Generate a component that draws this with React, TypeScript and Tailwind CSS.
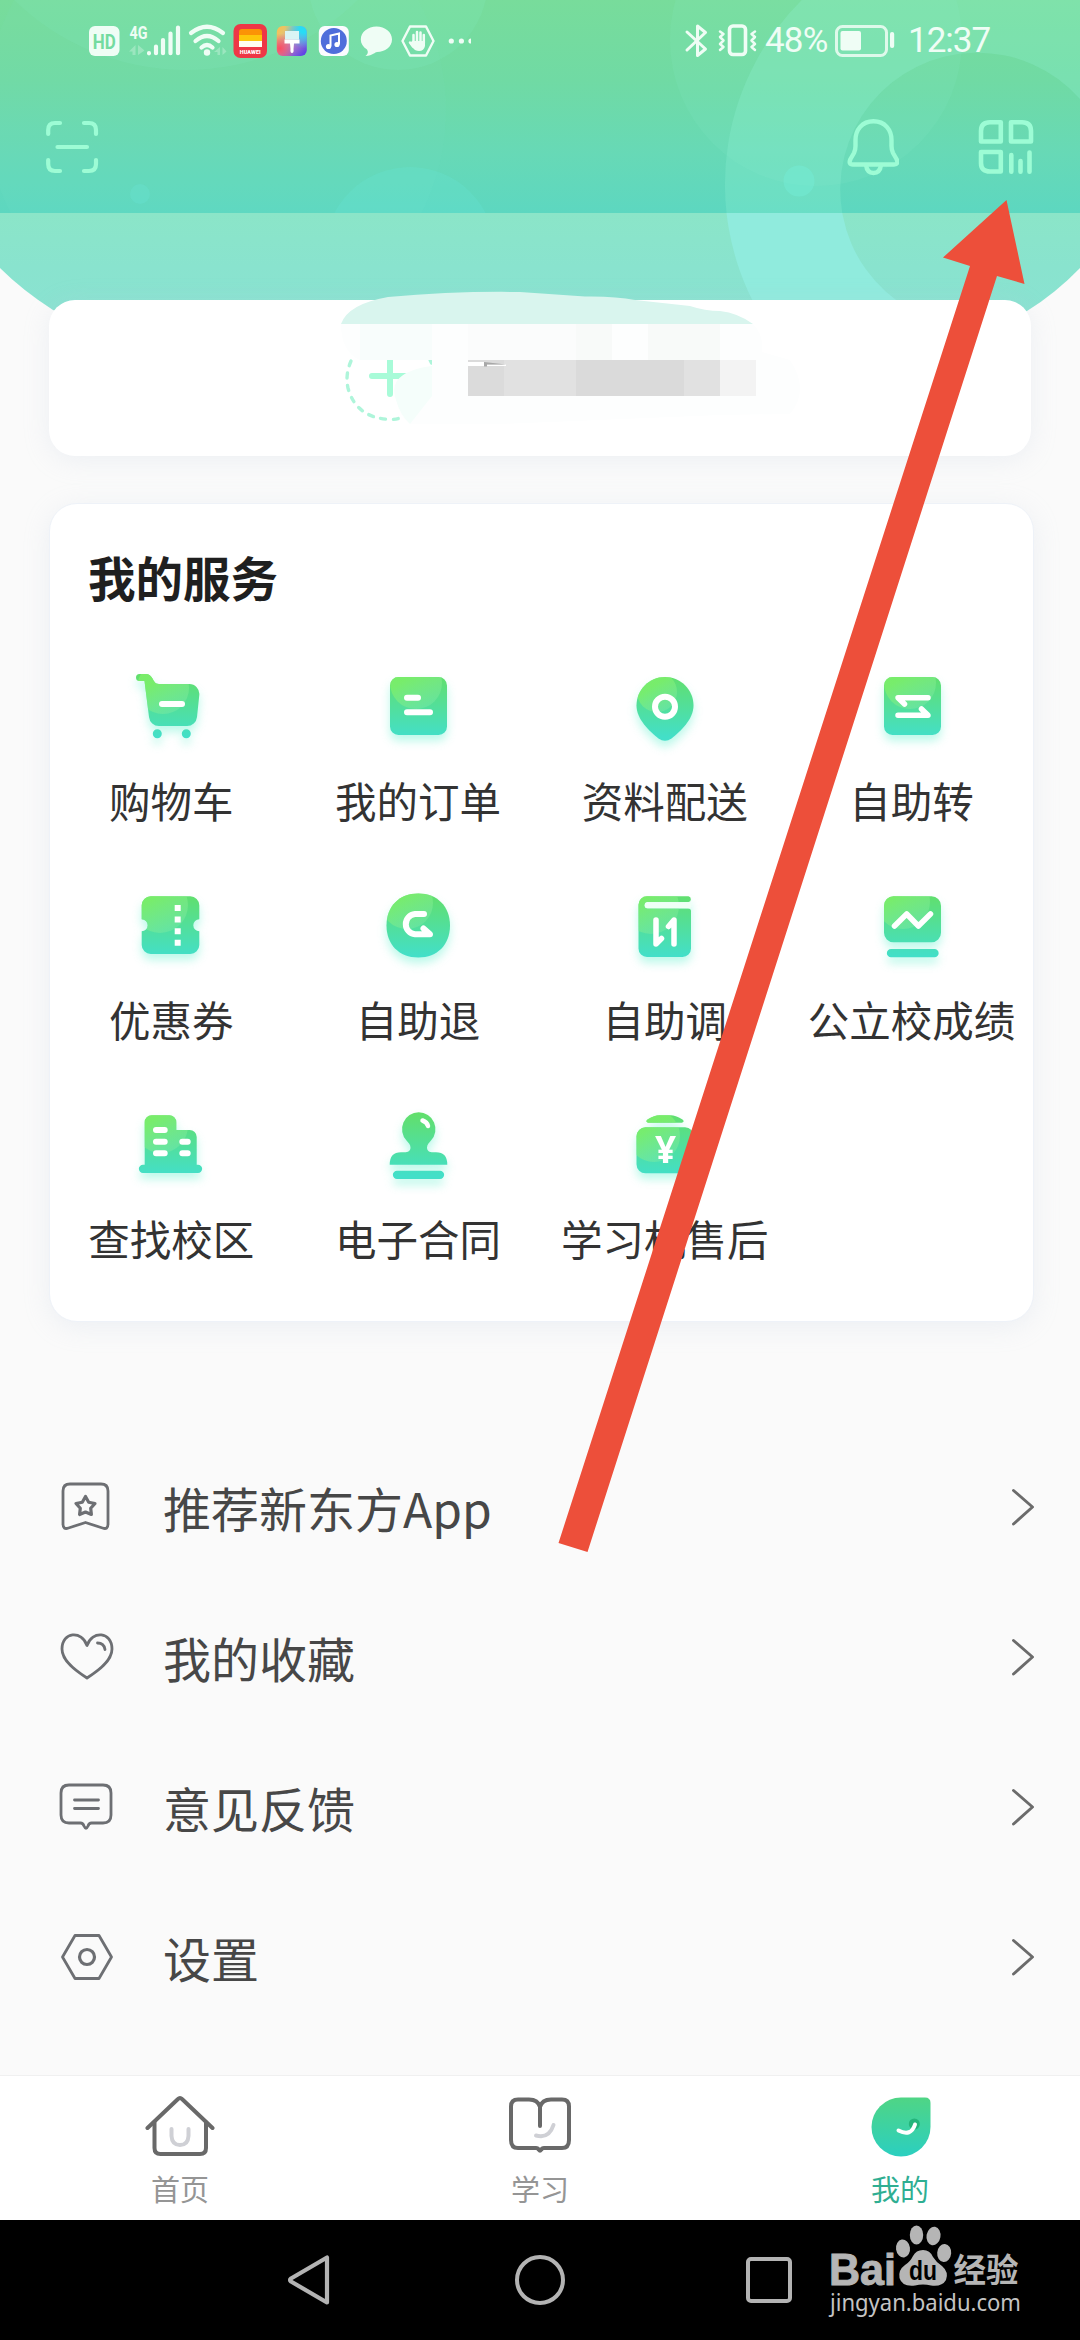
import type { ReactNode } from 'react';

const FONT = "font-['Noto_Sans_CJK_SC','Noto_Sans',sans-serif]";

// Green service icon: gradient body with a soft highlight circle clipped to it
const ServiceIcon = ({ id, body, shine, children }: { id: string; body: string; shine?: [number, number, number]; children?: ReactNode }) => (
  <svg className="h-[72px] w-[72px] overflow-visible drop-shadow-[0_6px_5px_rgba(80,240,200,0.38)]" viewBox="0 0 72 72" fill="none">
    <defs>
      <linearGradient id={`fill-${id}`} gradientUnits="userSpaceOnUse" x1="36" y1="4" x2="36" y2="66">
        <stop offset="0" stopColor="#62df6b" />
        <stop offset="1" stopColor="#43dfc8" />
      </linearGradient>
      <linearGradient id={`shine-${id}`} x1="0.2" y1="0.1" x2="0.8" y2="1">
        <stop offset="0.3" stopColor="#80f168" stopOpacity="0.75" />
        <stop offset="1" stopColor="#86ebae" stopOpacity="0.32" />
      </linearGradient>
      <clipPath id={`clip-${id}`}>
        <path d={body} />
      </clipPath>
    </defs>
    <path d={body} fill={`url(#fill-${id})`} />
    {shine && <circle cx={shine[0]} cy={shine[1]} r={shine[2]} fill={`url(#shine-${id})`} clipPath={`url(#clip-${id})`} />}
    <g stroke="#fff" strokeWidth="6" strokeLinecap="round" strokeLinejoin="round">{children}</g>
  </svg>
);

const SQUARE = 'M16.500 6H56.500A8.500 8.500 0 0 1 65 14.500V55.500A8.500 8.500 0 0 1 56.500 64H16.500A8.500 8.500 0 0 1 8 55.500V14.500A8.500 8.500 0 0 1 16.500 6Z';

const services = [
  {
    label: '购物车',
    icon: (
      <ServiceIcon
        id="cart"
        shine={[28, 17, 26]}
        body="M4.500 3H11C14 3 16 5 17.500 7.500C19 10 20 13 24 13H54A10 10 0 0 1 64.300 24L62 46A10 10 0 0 1 52 55H24A10 10 0 0 1 14 46L9.500 10H4.500A3.500 3.500 0 0 1 4.500 3Z M17.800 62.700a4.500 4.500 0 1 0 9 0a4.500 4.500 0 1 0 -9 0Z M46.800 62.700a4.500 4.500 0 1 0 9 0a4.500 4.500 0 1 0 -9 0Z"
      >
        <path d="M27 33H47" />
      </ServiceIcon>
    ),
  },
  {
    label: '我的订单',
    icon: (
      <ServiceIcon id="order" shine={[34, 12, 26]} body={SQUARE}>
        <path d="M25 26.700H36M25 41.300H48" />
      </ServiceIcon>
    ),
  },
  {
    label: '资料配送',
    icon: (
      <ServiceIcon
        id="delivery"
        shine={[28, 21, 20]}
        body="M36 6C52 6 64.500 19 64.500 34.500C64.500 48 52 60 42.500 67.500Q36 72 29.500 67.500C20 60 7.500 48 7.500 34.500C7.500 19 20 6 36 6Z"
      >
        <circle cx="36" cy="35.700" r="10" />
      </ServiceIcon>
    ),
  },
  {
    label: '自助转',
    icon: (
      <ServiceIcon id="transfer" shine={[34, 12, 26]} body={SQUARE}>
        <path d="M52 26.700H22L28.500 33M22 44.300H52L45.500 38" strokeWidth="5.500" />
      </ServiceIcon>
    ),
  },
  {
    label: '优惠券',
    icon: (
      <ServiceIcon
        id="coupon"
        shine={[25, 15, 28]}
        body="M15.700 6.300H55.300A9 9 0 0 1 64.300 15.300V29.300A6 6 0 0 0 64.300 41.300V55A9 9 0 0 1 55.300 64H15.700A9 9 0 0 1 6.700 55V41.300A6 6 0 0 0 6.700 29.300V15.300A9 9 0 0 1 15.700 6.300Z"
      >
        <path d="M42.700 15V56" strokeDasharray="6 5.600" strokeLinecap="butt" />
      </ServiceIcon>
    ),
  },
  {
    label: '自助退',
    icon: (
      <ServiceIcon
        id="refund"
        shine={[25, 13, 26]}
        body="M36.300 3.500C55.500 3.500 68 16.500 68 35.500C68 54.500 55.500 67.500 36.300 67.500C17 67.500 4.500 54.500 4.500 35.500C4.500 16.500 17 3.500 36.300 3.500Z"
      >
        <path d="M42 24H33A10.200 10.200 0 0 0 33 44.300H48L41.500 38.500" />
      </ServiceIcon>
    ),
  },
  {
    label: '自助调',
    icon: (
      <ServiceIcon
        id="adjust"
        shine={[22, 16, 28]}
        body="M18 6.300H59.500A2.900 2.900 0 0 1 59.500 12H18.500Q15.500 12 15.500 15.200T18.500 18.400H59Q62 18.400 62 21V58.500A8.500 8.500 0 0 1 53.500 67H18A8.500 8.500 0 0 1 9.500 58.500V14.800A8.500 8.500 0 0 1 18 6.300Z"
      >
        <path d="M18.700 15.300H59.500" strokeWidth="6" stroke="#effff6" />
        <path d="M27 30V54L32.500 48.500M45 54V30L39.500 36.500" strokeWidth="5.500" />
      </ServiceIcon>
    ),
  },
  {
    label: '公立校成绩',
    icon: (
      <ServiceIcon
        id="score"
        shine={[27, 12, 27]}
        body="M17.500 6.300H55.500A9.500 9.500 0 0 1 65 15.800V42.800A9.500 9.500 0 0 1 55.500 52.300H17.500A9.500 9.500 0 0 1 8 42.800V15.800A9.500 9.500 0 0 1 17.500 6.300Z M15 59H58.500A4.100 4.100 0 0 1 58.500 67.300H15A4.100 4.100 0 0 1 15 59Z"
      >
        <path d="M18.500 36L30.700 24L42.400 36L54.500 24" strokeWidth="5.500" />
      </ServiceIcon>
    ),
  },
  {
    label: '查找校区',
    icon: (
      <ServiceIcon
        id="campus"
        shine={[26, 17, 27]}
        body="M16.700 6.300H34.300A7 7 0 0 1 41.300 13.300V21H54.700A7 7 0 0 1 61.700 28V55.700H63A4.150 4.150 0 0 1 63 64H8A4.150 4.150 0 0 1 8 55.700H9.700V13.300A7 7 0 0 1 16.700 6.300Z"
      >
        <path d="M21 21H29.700M21 32.700H29.700M21 44.200H29.700M47.300 32.700H52.700M47.300 44.200H52.700" />
      </ServiceIcon>
    ),
  },
  {
    label: '电子合同',
    icon: (
      <ServiceIcon
        id="contract"
        body="M36.700 3.300A16.800 16.800 0 0 1 49 31.500C47 34 45 35.500 45 38.500C45 42 47.500 43.300 51 43.300H54Q65.300 43.300 65.300 55.700H7.700Q7.700 43.300 19 43.300H22.500C26 43.300 28.500 42 28.500 38.500C28.500 35.500 26.500 34 24.500 31.500A16.800 16.800 0 0 1 36.700 3.300Z M15 61.700H58A4.150 4.150 0 0 1 58 70H15A4.150 4.150 0 0 1 15 61.700Z"
      >
        <path d="M40.500 11.500Q45 13 46 17" strokeWidth="4.500" />
      </ServiceIcon>
    ),
  },
  {
    label: '学习机售后',
    icon: (
      <ServiceIcon
        id="aftersale"
        shine={[25, 27, 26]}
        body="M16.500 18.300H56A9 9 0 0 1 65 27.300V55.300A9 9 0 0 1 56 64.300H16.500A9 9 0 0 1 7.500 55.300V27.300A9 9 0 0 1 16.500 18.300Z M19 13.700Q16 12.700 18.500 10.500Q26 6.300 30 6.300H42Q46 6.300 53.500 10.500Q56 12.700 53 13.700Z"
      >
        <text x="36.500" y="53.500" textAnchor="middle" fontFamily="Noto Sans" fontWeight="700" fontSize="37" fill="#fff" stroke="none">¥</text>
      </ServiceIcon>
    ),
  },
];

const menuItems = [
  {
    label: '推荐新东方App',
    icon: (
      <>
        <path d="M12 5H43Q50 5 50 12V45Q50 51 44.500 49L27.500 43.500L10.500 49Q5 51 5 45V12Q5 5 12 5Z" />
        <path d="M27.500 17.500L30.700 23.200L37 24.500L32.700 29.300L33.400 35.500L27.500 33L21.600 35.500L22.300 29.300L18 24.500L24.300 23.200Z" strokeWidth="3.200" />
      </>
    ),
  },
  {
    label: '我的收藏',
    icon: (
      <>
        <path d="M29 16.500C24 1 4 2.500 4 20C4 32 18 42 29 49C40 42 54 32 54 20C54 2.500 34 1 29 16.500Z" />
        <path d="M39.500 14Q46 14 47 20.500" />
      </>
    ),
  },
  {
    label: '意见反馈',
    icon: (
      <>
        <path d="M11 6H45Q53 6 53 14V36Q53 44 45 44H33.500Q31 44 30 47Q28 51.500 26 47Q25 44 22.500 44H11Q3 44 3 36V14Q3 6 11 6Z" />
        <path d="M16.500 21H40.500M16.500 29.500H40.500" />
      </>
    ),
  },
  {
    label: '设置',
    icon: (
      <>
        <path d="M17 6.500H41L53.500 28L41 49.500H17L4.500 28Z" />
        <circle cx="29" cy="28" r="7.500" strokeWidth="3.200" />
      </>
    ),
  },
];

const tabs = [
  {
    label: '首页',
    active: false,
    icon: (
      <g fill="none" strokeLinecap="round" strokeLinejoin="round" stroke="#696969" strokeWidth="4">
        <path d="M2.500 33L33 4Q35 2 37 4L67.500 33" />
        <path d="M9.500 27.500V53Q9.500 59 15.500 59H55Q61 59 61 53V27.500" />
        <path d="M26.500 34V41Q27 50 35 50Q43 50 43.500 41V34" stroke="#cfd0d5" />
      </g>
    ),
  },
  {
    label: '学习',
    active: false,
    icon: (
      <g fill="none" strokeLinecap="round" strokeLinejoin="round" stroke="#696969" strokeWidth="4">
        <path d="M31 40.500Q44 44 48.500 30" stroke="#cfd0d5" />
        <path d="M35 31V12Q33 4.500 24 4.500H13Q6 4.500 6 11.500V45Q6 53 13 53H31Q33 53 34 55Q35 56.500 36 55Q37 53 39 53H57Q64 53 64 45V11.500Q64 4.500 57 4.500H46Q37 4.500 35 12" />
      </g>
    ),
  },
  {
    label: '我的',
    active: true,
    icon: (
      <g fill="none" strokeLinecap="round">
        <defs>
          <linearGradient id="leaf" x1="0" y1="0" x2="0" y2="1">
            <stop offset="0" stopColor="#4fd585" />
            <stop offset="1" stopColor="#2bcfc0" />
          </linearGradient>
        </defs>
        <path d="M36 2.500H60Q65.500 2.500 65.500 8V32A29.500 29.500 0 1 1 36 2.500Z" fill="url(#leaf)" />
        <circle cx="49.300" cy="29" r="5.500" fill="#25b57b" />
        <path d="M33.500 35.500Q46 42 50 29.500" stroke="#fff" strokeWidth="4" />
      </g>
    ),
  },
];

const StatusBar = () => (
  <div className="flex h-[82px] items-center pl-[88px] pr-[88px] text-[#effdf5]">
    <svg className="h-9 w-[388px] overflow-visible" viewBox="88 23 388 36" fill="none">
      <defs>
        <linearGradient id="theme" x1="0" y1="0" x2="1" y2="1">
          <stop offset="0" stopColor="#fbc04a" />
          <stop offset="0.2" stopColor="#e8c46c" />
          <stop offset="0.5" stopColor="#c48ac0" />
          <stop offset="1" stopColor="#4b35ee" />
        </linearGradient>
        <radialGradient id="themeRed" cx="0.1" cy="0.75" r="0.5">
          <stop offset="0" stopColor="#fb4d62" />
          <stop offset="1" stopColor="#fb4d62" stopOpacity="0" />
        </radialGradient>
        <radialGradient id="themeCyan" cx="0.9" cy="0.1" r="0.65">
          <stop offset="0.2" stopColor="#27dcf5" />
          <stop offset="1" stopColor="#27dcf5" stopOpacity="0" />
        </radialGradient>
      </defs>
      <rect x="89" y="26" width="30.500" height="30" rx="6" fill="currentColor" />
      <text x="104.200" y="48.500" textAnchor="middle" fontFamily="Roboto" fontWeight="700" fontSize="19.500" textLength="23" lengthAdjust="spacingAndGlyphs" fill="#74dba0">HD</text>
      <text x="129.500" y="38.800" fontFamily="Roboto" fontWeight="700" fontSize="19" textLength="18" lengthAdjust="spacingAndGlyphs" fill="currentColor">4G</text>
      <g fill="currentColor" opacity="0.3">
        <path d="M135.500 45V55H132.500V51.500H129ZM138 55V45L144.500 50.500ZM220 47V55H217.500V52H214ZM222.500 47L226.500 51.500L222.500 55Z" />
      </g>
      <g stroke="currentColor" strokeWidth="4.200" strokeLinecap="round">
        <path d="M149 53.200V53.300M156 46.500V53.200M163 40V53.200M170.500 33.500V53.200M178 27.500V53.200" />
        <path d="M191 33Q207 20.500 223 33M195.500 41Q207 31 218.500 41M201.500 47.500Q207 42.500 212.500 47.500" />
      </g>
      <circle cx="207" cy="52.500" r="3.200" fill="currentColor" />
      <rect x="233.500" y="24" width="33.500" height="34" rx="7" fill="#ee3746" />
      <path d="M239 32Q239 29 242 29H259Q262 29 262 32V35H239Z" fill="#fb9306" />
      <path d="M239 35H262V41H239Z" fill="#fdc60b" />
      <path d="M239 41H262V47H239Z" fill="#fffdf0" />
      <text x="250.200" y="53.500" textAnchor="middle" fontFamily="Roboto" fontWeight="900" fontSize="5.500" textLength="21" fill="#fff">HUAWEI</text>
      <rect x="276.800" y="26" width="30" height="30" rx="6" fill="url(#theme)" />
      <rect x="276.800" y="26" width="30" height="30" rx="6" fill="url(#themeRed)" />
      <rect x="276.800" y="26" width="30" height="30" rx="6" fill="url(#themeCyan)" />
      <path d="M285 31H299V39.500H285Z" fill="#d9f4f5" />
      <path d="M284.500 39.500H299.500V43.500H294L293.500 49Q294 53 292 53Q290 53 290.500 49L290 43.500H284.500Z" fill="#fff" />
      <rect x="318.800" y="26" width="30" height="30" rx="6" fill="#fbfbff" />
      <circle cx="333.800" cy="41" r="13" fill="#4f6edb" />
      <path d="M330.500 46.500V35.500L339 33.500V44.500" stroke="#fff" strokeWidth="2" />
      <circle cx="328.500" cy="46.500" r="2.600" fill="#fff" />
      <circle cx="337" cy="44.500" r="2.600" fill="#fff" />
      <path d="M376.500 26.500C385 26.500 392 32 392 39.500C392 47 385 52 377 52C375 52 373 55.500 365.500 56C368 54 368.500 52 367 49.500C363 47 360.800 43.500 360.800 39.500C360.800 32 368 26.500 376.500 26.500Z" fill="currentColor" />
      <path d="M410 26.500H426L433.500 41L426 55.500H410L402.500 41Z" stroke="currentColor" strokeWidth="2.400" strokeLinejoin="round" />
      <path d="M413.500 43V35M417 42V32M420.500 42V32.500M423.800 43V35M410 42.500L413 46.500" stroke="currentColor" strokeWidth="2.500" strokeLinecap="round" />
      <path d="M412.300 41H425V46Q424 51 419 51Q415 51 413 48L409.500 43Z" fill="currentColor" />
      <circle cx="451.300" cy="41" r="2.600" fill="currentColor" />
      <circle cx="461.400" cy="41" r="2.600" fill="currentColor" />
      <path d="M471 38.400A2.600 2.600 0 0 0 471 43.600Z" fill="currentColor" />
    </svg>
    <div className="ml-auto flex items-center font-['Roboto',sans-serif] text-[35px] leading-[36px]">
      <svg className="h-9 w-20" viewBox="682 23 80 36" fill="none" stroke="currentColor" strokeWidth="3" strokeLinejoin="round" strokeLinecap="round">
        <path d="M687 32L705.500 49L697.500 55.500V26L705.500 32.500L687 50" />
        <rect x="729.500" y="26" width="16" height="28.500" rx="3.500" strokeWidth="3.600" />
        <path d="M720 31.500L723.500 34L720 37L723.500 40.500L720 44L723.500 47L720 50M755 31.500L751.500 34L755 37L751.500 40.500L755 44L751.500 47L755 50" strokeWidth="2.500" />
      </svg>
      <span className="w-[70px] whitespace-nowrap pl-[3px] tracking-[-0.8px]">48%</span>
      <svg className="ml-0.5 h-9 w-[62px]" viewBox="834 23 62 36" fill="none">
        <rect x="836.500" y="26.500" width="50" height="29" rx="6" stroke="currentColor" strokeOpacity="0.85" strokeWidth="3" />
        <rect x="840.500" y="31" width="20.500" height="19.500" rx="2" fill="currentColor" />
        <rect x="890" y="32" width="4.200" height="16" rx="2" fill="currentColor" />
      </svg>
      <span className="ml-3 w-[84px] whitespace-nowrap tracking-[-1px]">12:37</span>
    </div>
  </div>
);

const Header = () => (
  <header className="relative h-[300px]">
    <svg className="absolute left-0 top-0 h-[320px] w-[1080px]" viewBox="0 0 1080 320">
      <defs>
        <linearGradient id="band" x1="0" y1="0" x2="0" y2="1">
          <stop offset="0" stopColor="#78dc9b" />
          <stop offset="0.38" stopColor="#70daa4" />
          <stop offset="0.72" stopColor="#67d9b6" />
          <stop offset="1" stopColor="#5dd7c0" />
        </linearGradient>
        <linearGradient id="under" x1="0" y1="0" x2="0" y2="1">
          <stop offset="0" stopColor="#8be5c8" />
          <stop offset="0.5" stopColor="#89e3ce" />
          <stop offset="1" stopColor="#8ae2d2" />
        </linearGradient>
        <clipPath id="bandClip">
          <path d="M0 0H1080V213H0Z" />
        </clipPath>
        <clipPath id="underClip">
          <path d="M0 213H1080V320H0Z" />
        </clipPath>
      </defs>
      <path d="M0 213H1080V268Q1056 293 1027 311L1000 320H80L53 310Q22 290 0 268Z" fill="url(#under)" />
      <path d="M0 0H1080V213H0Z" fill="url(#band)" />
      <g clipPath="url(#bandClip)" fill="#8af0d0">
        <circle cx="186" cy="-176" r="246" opacity="0.12" />
        <circle cx="398" cy="-20" r="90" opacity="0.14" />
        <circle cx="216" cy="110" r="230" opacity="0.05" />
        <circle cx="410" cy="252" r="85" fill="#6ae6dc" opacity="0.22" />
        <circle cx="140" cy="194" r="10" fill="#6ae6dc" opacity="0.25" />
        <circle cx="816" cy="40" r="146" opacity="0.12" />
        <circle cx="799" cy="181" r="15.500" fill="#6ef0e0" opacity="0.35" />
      </g>
      {/* large ring on the right, brighter below the band */}
      <path
        clipPath="url(#bandClip)"
        d="M807 -5A259 259 0 0 0 757 309H910A137 137 0 1 1 1080 99V-5Z"
        fill="#92f2d8"
        opacity="0.25"
      />
      <path
        clipPath="url(#underClip)"
        d="M807 -5A259 259 0 0 0 757 309H910A137 137 0 1 1 1080 99V-5Z"
        fill="#90ebdd"
      />
    </svg>
    <div className="relative">
      <StatusBar />
      <div className="flex h-[130px] items-center pl-11 pr-11">
        <svg className="h-14 w-14" viewBox="44 119 56 56" fill="none" stroke="#9dfcd5" strokeWidth="4.200" strokeLinecap="round">
          <path d="M48.200 134V130Q48.200 123 55 123H60M84 123H89Q96 123 96 130V134M96 160V164Q96 171 89 171H84M60 171H55Q48.200 171 48.200 164V160M57.500 147H87" />
        </svg>
        <svg className="ml-auto h-[60px] w-[54px]" viewBox="844 118 54 60" fill="none" stroke="#9dfcd5" strokeWidth="4.400" strokeLinejoin="round">
          <path d="M872.500 122.200C861 122.200 854.500 131 854.500 141V147Q854.500 151 853 154L849.500 160Q847 165.500 852 165.500H893Q898 165.500 895.500 160L892 154Q890.500 151 890.500 147V141C890.500 131 884 122.200 872.500 122.200Z" />
          <path d="M865 166Q866 174 872.500 174Q879 174 880 166" />
        </svg>
        <svg className="ml-[77px] h-[60px] w-[60px]" viewBox="975 117 60 60" fill="none" stroke="#9dfcd5" strokeWidth="4.600" strokeLinejoin="round" strokeLinecap="round">
          <path d="M989 122.200H999.800V141.500H980V131Q980 122.200 989 122.200ZM1010 122.200H1021Q1030 122.200 1030 131V141.500H1010ZM980 152H999.800V171.500H989Q980 171.500 980 163Z" />
          <path d="M1010.300 155V171.800M1019.500 161V171.800M1028.500 152.500V171.800" />
        </svg>
      </div>
    </div>
  </header>
);

const ProfileCard = () => (
  <section className="relative ml-[49px] h-[156px] w-[982px] rounded-[26px] bg-white shadow-[0_4px_26px_rgba(190,205,225,0.22)]">
    <svg className="absolute left-[251px] top-[-20px] h-[170px] w-[520px]" viewBox="300 280 520 170" fill="none">
      {/* add-avatar button */}
      <path d="M351 361Q345 375 348 388Q356 418 390 419.500Q399 419.500 404 416" stroke="#aef5da" strokeWidth="3.400" strokeLinecap="round" strokeDasharray="5 7.500" />
      <path d="M430 360L431.500 363" stroke="#aef5da" strokeWidth="3.200" strokeLinecap="round" />
      <path d="M390 360V394M372 376H408" stroke="#a8fbd8" strokeWidth="6" strokeLinecap="round" />
      <path d="M432 366Q386 372 396 400Q400 415 410 424H432Z" fill="#f5fefb" />
      {/* smudged nickname */}
      <path d="M341 324Q348 304 388 297Q455 291 520 292L585 296.500Q615 296 635 300L690 306Q705 311 720 311Q738 313 753 324Z" fill="#d9f5ee" />
      <path d="M341 324H753Q764 335 762 352L790 360Q810 390 790 414L720 415L500 424H410L432 396V360H360Q341 352 341 324Z" fill="#fdfefe" />
      <path d="M360 324H432V360H360Z" fill="#f8fdfc" />
      <path d="M468 324H576V360H468Z" fill="#fbfcfc" />
      <path d="M576 324H612V360H576ZM648 324H720V360H648Z" fill="#f8faf9" />
      <path d="M468 360H504V396H468Z" fill="#dbdbdb" />
      <path d="M504 360H576V396H504Z" fill="#e1e1e1" />
      <path d="M576 360H684V396H576Z" fill="#dadada" />
      <path d="M684 360H720V396H684Z" fill="#e1e1e1" />
      <path d="M720 360H756V396H720Z" fill="#f3f3f3" />
      <path d="M468 362H484V366H468ZM487 364.500H506V366H487Z" fill="#fff" />
      <path d="M484 362L506 364.500H487V366.500H484Z" fill="#a8a8a8" />
    </svg>
  </section>
);

const ServicesCard = () => (
  <section className="ml-[49px] mt-[47px] h-[819px] w-[985px] rounded-[28px] border border-[#eef2f8] bg-white pt-[43px] shadow-[0_5px_26px_rgba(190,205,225,0.22)]">
    <h2 className="pl-[38px] text-[47.5px] font-bold leading-[60px] text-[#1f1f1f]">我的服务</h2>
    <div className="-ml-0.5 -mr-0.5 mt-16 grid grid-cols-4 gap-y-[65px]">
      {services.map((item) => (
        <div key={item.label} className="flex flex-col items-center">
          {item.icon}
          <span className="mt-8 whitespace-nowrap text-[41.5px] leading-[50px] text-[#333]">{item.label}</span>
        </div>
      ))}
    </div>
  </section>
);

const Menu = () => (
  <nav className="mt-[110px]">
    {menuItems.map((item) => (
      <div key={item.label} className="flex h-[150px] items-center pl-[58px] pr-[45px]">
        <svg className="h-[56px] w-[58px]" viewBox="0 0 58 56" fill="none" stroke="#6d6f73" strokeWidth="2.800" strokeLinecap="round" strokeLinejoin="round">
          {item.icon}
        </svg>
        <span className="ml-[47px] text-[48px] leading-[60px] text-[#474747]">{item.label}</span>
        <svg className="ml-auto h-10 w-6" viewBox="0 0 24 40" fill="none" stroke="#6b6b6b" strokeWidth="2.900" strokeLinecap="round" strokeLinejoin="round">
          <path d="M2.500 3.500L21.500 20L2.500 37" />
        </svg>
      </div>
    ))}
  </nav>
);

const TabBar = () => (
  <nav className="mt-[43px] grid h-[145px] grid-cols-3 border-t border-[#f0f0f0] bg-white">
    {tabs.map((tab) => (
      <div key={tab.label} className="flex flex-col items-center pt-[19px]">
        <svg className="h-[62px] w-[70px]" viewBox="0 0 70 62">
          {tab.icon}
        </svg>
        <span className={`mt-[13px] text-[29px] leading-[36px] ${tab.active ? 'text-[#2fae92]' : 'text-[#959595]'}`}>{tab.label}</span>
      </div>
    ))}
  </nav>
);

const SystemNav = () => (
  <div className="flex h-[120px] items-center bg-black pl-[284px]">
    <svg className="h-14 w-14" viewBox="284 2252 56 56" fill="none" stroke="#b3b3b3" strokeWidth="4.200" strokeLinejoin="round">
      <path d="M327 2257.500V2302.500L291 2281.500Q289 2280 291 2278.500Z" />
    </svg>
    <span className="ml-[175px] h-[50px] w-[50px] rounded-full border-[4px] border-[#b3b3b3]" />
    <span className="ml-[181px] h-[46px] w-[46px] rounded-[5px] border-[4.5px] border-[#b3b3b3]" />
    <svg className="ml-[33px] h-[120px] w-[210px]" viewBox="824 2220 210 120">
      <g fill="#b5b5b5" fontWeight="700">
        <text x="828" y="2284.500" fontFamily="Liberation Sans" fontSize="44" textLength="67" lengthAdjust="spacingAndGlyphs" stroke="#b5b5b5">Bai</text>
        <text x="952.500" y="2282" fontFamily="Noto Sans CJK SC" fontSize="33" textLength="65" lengthAdjust="spacingAndGlyphs">经验</text>
      </g>
      <g fill="#b5b5b5">
        <ellipse cx="902" cy="2248.500" rx="7" ry="9" transform="rotate(-8 902 2248.500)" />
        <ellipse cx="915.500" cy="2235" rx="6.700" ry="9.500" />
        <ellipse cx="932.500" cy="2236" rx="7" ry="9.300" transform="rotate(10 932.500 2236)" />
        <ellipse cx="943.200" cy="2253" rx="7" ry="9" transform="rotate(5 943.200 2253)" />
        <path d="M922 2250Q929 2250 932 2257Q935 2262 941 2266Q948 2272 945 2280Q941 2287 930 2285.500Q922 2283.500 914 2285.500Q901 2287 898.500 2278Q897 2270 904 2265Q909 2262 912 2256Q915 2250 922 2250Z" />
      </g>
      <text x="922" y="2280" textAnchor="middle" fontFamily="Liberation Sans" fontWeight="700" fontSize="27" textLength="28" lengthAdjust="spacingAndGlyphs" fill="#000">du</text>
      <text x="829" y="2310.500" fontFamily="Noto Sans" fontSize="23.500" textLength="191" lengthAdjust="spacingAndGlyphs" fill="#c4c4c4">jingyan.baidu.com</text>
    </svg>
  </div>
);

const App = () => (
  <div className={`relative h-[2340px] w-[1080px] overflow-hidden bg-[#fafafa] ${FONT}`}>
    <Header />
    <ProfileCard />
    <ServicesCard />
    <Menu />
    <TabBar />
    <SystemNav />
    {/* pointer towards the QR code entry */}
    <svg className="pointer-events-none absolute left-0 top-0 h-[2340px] w-[1080px]" viewBox="0 0 1080 2340">
      <path d="M1006.500 200L1024.500 284L997 276L587.500 1552L558.500 1543L970 266L943 257.500Z" fill="#ed4f3a" />
    </svg>
  </div>
);

export default App;
